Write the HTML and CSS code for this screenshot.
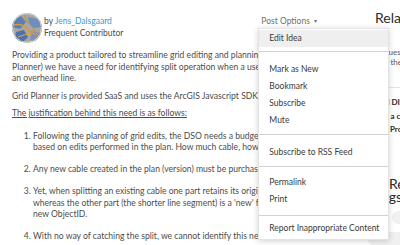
FILE: index.html
```html
<!doctype html>
<html>
<head>
    <meta charset="utf-8">
    <title>Idea - Split operation</title>
    <link rel="stylesheet" href="styles.css">
</head>
<body>
<div class="page">
    <div class="main">
        <div class="author">
            <svg class="avatar" width="30" height="30" viewBox="0 0 30 30">
                <defs><clipPath id="round"><circle cx="15" cy="15" r="15"/></clipPath></defs>
                <g clip-path="url(#round)">
                    <rect width="30" height="30" fill="#a9a79f"/>
                    <path d="M0 8 L9 3 L14 9 L8 16 L0 14 Z" fill="#5b7fb2"/>
                    <path d="M16 4 L26 6 L30 14 L22 15 L17 10 Z" fill="#6d8fbf"/>
                    <path d="M4 19 L12 17 L16 24 L10 30 L2 28 Z" fill="#4f73a8"/>
                    <path d="M19 18 L28 20 L27 29 L18 27 Z" fill="#7593c0"/>
                    <path d="M2 12 Q10 10 14 15 T26 22" stroke="#d8973f" stroke-width="1.4" fill="none"/>
                    <path d="M12 2 Q15 10 20 14 T24 28" stroke="#c98b3b" stroke-width="1" fill="none"/>
                    <path d="M6 24 Q14 20 20 22" stroke="#e0a552" stroke-width="1" fill="none"/>
                    <circle cx="15" cy="15" r="14.5" fill="none" stroke="#d9d9d9" stroke-width="1"/>
                </g>
            </svg>
            <div class="author-text">
                <div>by <a href="#" class="user">Jens_Dalsgaard</a></div>
                <div>Frequent Contributor</div>
            </div>
            <div class="options">
                Post Options <span class="caret">&#9662;</span>
                <div class="menu">
                    <ul class="sec first">
                        <li class="active">Edit Idea</li>
                    </ul>
                    <ul class="sec">
                        <li>Mark as New</li>
                        <li>Bookmark</li>
                        <li>Subscribe</li>
                        <li>Mute</li>
                    </ul>
                    <ul class="sec">
                        <li>Subscribe to RSS Feed</li>
                    </ul>
                    <ul class="sec pair">
                        <li>Permalink</li>
                        <li>Print</li>
                    </ul>
                    <ul class="sec last">
                        <li>Report Inappropriate Content</li>
                    </ul>
                </div>
            </div>
        </div>

        <div class="body">
            <p>Providing a product tailored to streamline grid editing and planning for the utilities (Grid Planner) we have a need for identifying split operation when a user performs a split or cut on an overhead line.</p>
            <p>Grid Planner is provided SaaS and uses the ArcGIS Javascript SDK.</p>
            <p class="u">The justification behind this need is as follows:</p>
            <ol>
                <li>Following the planning of grid edits, the DSO needs a budget for the new grid design based on edits performed in the plan. How much cable, how many poles etc.</li>
                <li>Any new cable created in the plan (version) must be purchased.</li>
                <li>Yet, when splitting an existing cable one part retains its original ObjectID and GlobalID, whereas the other part (the shorter line segment) is a 'new' feature, which then gets a new ObjectID.</li>
                <li>With no way of catching the split, we cannot identify this new feature.</li>
            </ol>
        </div>
    </div>

    <div class="side">
        <h3 class="side-title">Related Ideas</h3>
        <div class="side-note">
            <div>Requests for edits</div>
            <div>Use the split tool</div>
        </div>
        <div class="side-list">
            <div>Add DIMS support</div>
            <div>Use a cut event</div>
            <div>Get Project info</div>
        </div>
        <h3 class="side-title tags">Related<br>Tags</h3>
        <span class="pill">split</span>
        <span class="pill second">javascript api</span>
    </div>
</div>
</body>
</html>
```

FILE: styles.css
```css
body {
    margin: 0;
    font-family: Lato, "Open Sans", sans-serif;
    color: #4c4c4c;
    background: #fff;
    overflow: hidden;
}

.page {
    display: grid;
    grid-template-columns: 348px 1fr;
    column-gap: 15px;
    padding-left: 12px;
    width: 700px;
}

.author {
    display: flex;
    align-items: flex-start;
    padding-top: 13px;
    font-size: 8.5px;
    line-height: 12px;
}

.avatar {
    display: block;
    flex: none;
    margin-right: 2px;
}

.author-text {
    padding-top: 2px;
}

.user {
    color: #3a98d6;
    text-decoration: none;
}

.options {
    position: relative;
    margin-left: auto;
    margin-right: 43px;
    padding-top: 2px;
    color: #707070;
}

.caret {
    font-size: 6px;
    margin-left: 2px;
    vertical-align: 1px;
}

.menu {
    position: absolute;
    top: 15px;
    left: -3px;
    width: 129px;
    background: #fff;
    border: 1px solid #e3e3e3;
    box-shadow: 0 1px 6px rgba(0, 0, 0, 0.18);
    color: #3a3a3a;
    z-index: 2;
}

.sec {
    list-style: none;
    margin: 0;
    padding: 9px 0 5px;
    border-top: 1px solid #d2d2d2;
}

.sec.first {
    padding: 1px 0 4px;
    border-top: 0;
}

.sec.pair {
    padding: 7px 0;
}

.sec.last {
    padding: 4px 0 2px;
}

.sec li {
    padding-left: 10px;
    line-height: 17px;
    white-space: nowrap;
}

.sec li.active {
    background: #efefef;
}

.body {
    font-size: 8.6px;
    line-height: 11.5px;
    padding-top: 7px;
}

.body p {
    margin: 0 0 6px;
}

.body .u {
    text-decoration: underline;
}

.body ol {
    margin: 11px 0 0;
    padding-left: 21px;
}

.body li {
    margin-bottom: 10.5px;
}

.side {
    padding-top: 9px;
    color: #2b2b2b;
    white-space: nowrap;
}

.side-title {
    margin: 0;
    font-size: 14px;
    font-weight: normal;
    line-height: 18px;
}

.side-note {
    margin-top: 20px;
    font-size: 8px;
    line-height: 10px;
    color: #5a5a5a;
    padding-bottom: 20px;
    border-bottom: 1px solid #e4e4e4;
}

.side-list {
    margin-top: 8px;
    font-size: 8px;
    font-weight: bold;
    line-height: 13.5px;
}

.side-title.tags {
    margin-top: 40px;
    line-height: 13px;
    text-indent: 14px;
}

.pill {
    display: block;
    width: 60px;
    margin-top: 8px;
    margin-left: 17px;
    padding: 0 6px;
    font-size: 8px;
    line-height: 13px;
    color: #f0f0f0;
    background: #f0f0f0;
    border-radius: 7px;
}

.pill.second {
    margin-left: -8px;
}
```
